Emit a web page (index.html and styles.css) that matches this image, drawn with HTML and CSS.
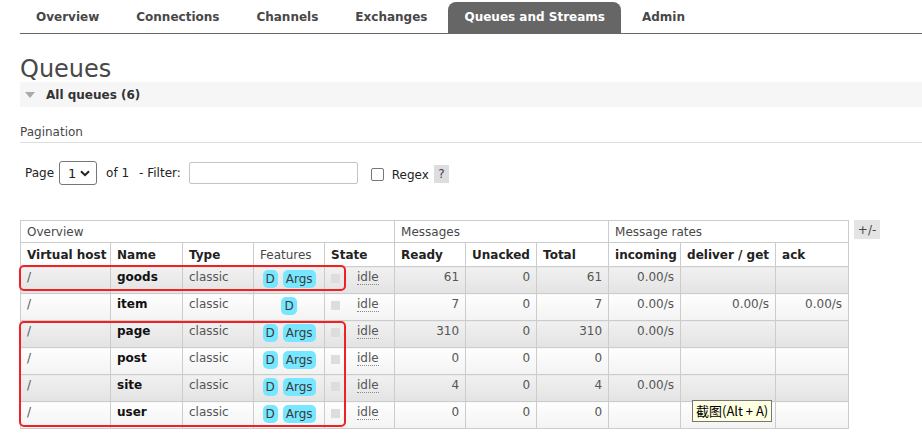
FILE: index.html
```html
<!DOCTYPE html>
<html>
<head>
<meta charset="utf-8">
<link rel="stylesheet" href="styles.css">
</head>
<body>
<div class="page">
  <nav class="tabs">
    <a class="tab">Overview</a>
    <a class="tab">Connections</a>
    <a class="tab">Channels</a>
    <a class="tab">Exchanges</a>
    <a class="tab active">Queues and Streams</a>
    <a class="tab">Admin</a>
  </nav>
  <h1 class="title">Queues</h1>
  <div class="section-head"><span class="tri"></span><span>All queues (6)</span></div>
  <h3 class="pag-title">Pagination</h3>
  <div class="filter-row">
    <span class="lbl">Page</span>
    <span class="select"><span>1</span><svg width="10" height="7" viewBox="0 0 10 7"><path d="M1 1.2 L5 5.2 L9 1.2" fill="none" stroke="#222" stroke-width="2"/></svg></span>
    <span class="lbl of">of 1</span>
    <span class="lbl flt">- Filter:</span>
    <span class="input"></span>
    <span class="check"></span>
    <span class="lbl regex">Regex</span>
    <span class="help">?</span>
  </div>
  <div class="table-wrap">
    <table class="list">
      <colgroup>
        <col class="c90"><col class="c72"><col class="c71"><col class="c71"><col class="c70"><col class="c71"><col class="c71"><col class="c72"><col class="c72"><col class="c95"><col class="c73">
      </colgroup>
      <thead>
        <tr class="group">
          <th colspan="5">Overview</th>
          <th colspan="3">Messages</th>
          <th colspan="3">Message rates</th>
        </tr>
        <tr class="cols">
          <th>Virtual host</th><th>Name</th><th>Type</th><th class="plain">Features</th><th>State</th>
          <th>Ready</th><th>Unacked</th><th>Total</th>
          <th>incoming</th><th>deliver / get</th><th>ack</th>
        </tr>
      </thead>
      <tbody>
        <tr class="alt1">
          <td>/</td><td class="name">goods</td><td>classic</td>
          <td class="feat"><span class="badge">D</span><span class="badge">Args</span></td>
          <td><span class="sq"></span><span class="idle">idle</span></td>
          <td class="num">61</td><td class="num">0</td><td class="num">61</td>
          <td class="num">0.00/s</td><td class="num"></td><td class="num"></td>
        </tr>
        <tr class="alt2">
          <td>/</td><td class="name">item</td><td>classic</td>
          <td class="feat"><span class="badge">D</span></td>
          <td><span class="sq"></span><span class="idle">idle</span></td>
          <td class="num">7</td><td class="num">0</td><td class="num">7</td>
          <td class="num">0.00/s</td><td class="num">0.00/s</td><td class="num">0.00/s</td>
        </tr>
        <tr class="alt1">
          <td>/</td><td class="name">page</td><td>classic</td>
          <td class="feat"><span class="badge">D</span><span class="badge">Args</span></td>
          <td><span class="sq"></span><span class="idle">idle</span></td>
          <td class="num">310</td><td class="num">0</td><td class="num">310</td>
          <td class="num">0.00/s</td><td class="num"></td><td class="num"></td>
        </tr>
        <tr class="alt2">
          <td>/</td><td class="name">post</td><td>classic</td>
          <td class="feat"><span class="badge">D</span><span class="badge">Args</span></td>
          <td><span class="sq"></span><span class="idle">idle</span></td>
          <td class="num">0</td><td class="num">0</td><td class="num">0</td>
          <td class="num"></td><td class="num"></td><td class="num"></td>
        </tr>
        <tr class="alt1">
          <td>/</td><td class="name">site</td><td>classic</td>
          <td class="feat"><span class="badge">D</span><span class="badge">Args</span></td>
          <td><span class="sq"></span><span class="idle">idle</span></td>
          <td class="num">4</td><td class="num">0</td><td class="num">4</td>
          <td class="num">0.00/s</td><td class="num"></td><td class="num"></td>
        </tr>
        <tr class="alt2">
          <td>/</td><td class="name">user</td><td>classic</td>
          <td class="feat"><span class="badge">D</span><span class="badge">Args</span></td>
          <td><span class="sq"></span><span class="idle">idle</span></td>
          <td class="num">0</td><td class="num">0</td><td class="num">0</td>
          <td class="num"></td><td class="num"></td><td class="num"></td>
        </tr>
      </tbody>
    </table>
    <span class="plusminus">+/-</span>
    <div class="mark mark1"></div>
    <div class="mark mark2"></div>
    <div class="tooltip">截图(Alt + A)</div>
  </div>
</div>
</body>
</html>
```
FILE: styles.css
```css
* { box-sizing: border-box; }
body {
  margin: 0;
  background: #fff;
  font-family: "DejaVu Sans", Verdana, sans-serif;
  font-size: 12px;
  color: #484848;
}
.page { padding-left: 20px; }

.tabs {
  display: flex;
  gap: 5px;
  margin-top: 2px;
  height: 32px;
  border-bottom: 1px solid #666;
}
.tab {
  padding: 0 16px;
  font-weight: bold;
  line-height: 31px;
  color: #484848;
  border-radius: 8px 8px 0 0;
}
.tab.active { background: #666; color: #fff; }

.title {
  margin: 22px 0 0;
  font-size: 24px;
  font-weight: normal;
  line-height: 26px;
  color: #484848;
}

.section-head {
  display: flex;
  align-items: center;
  height: 25px;
  background: #f6f6f6;
  padding-left: 5px;
  font-weight: bold;
  color: #333;
}
.tri {
  width: 0; height: 0;
  border-left: 5px solid transparent;
  border-right: 5px solid transparent;
  border-top: 6px solid #aaa;
  margin: 1px 11px 0 0;
}

.pag-title {
  margin: 18px 0 0;
  font-size: 12px;
  font-weight: normal;
  line-height: 14px;
  padding-bottom: 3px;
  border-bottom: 1px solid #ddd;
  color: #484848;
}

.filter-row {
  display: flex;
  align-items: center;
  height: 24px;
  margin-top: 18px;
  padding-left: 5px;
  color: #222;
}
.select {
  display: flex;
  align-items: center;
  justify-content: space-between;
  width: 38px;
  height: 24px;
  margin-left: 5px;
  padding: 0 6px 0 8px;
  border: 1px solid #767676;
  border-radius: 3px;
  font-size: 13px;
}
.of { margin-left: 9px; }
.flt { margin-left: 10px; }
.input {
  width: 169px;
  height: 22px;
  margin-left: 8px;
  border: 1px solid #c4c4c4;
  border-radius: 2px;
}
.check {
  width: 13px;
  height: 13px;
  margin-left: 13px;
  margin-top: 2px;
  border: 1px solid #767676;
  border-radius: 2px;
}
.regex { margin-left: 8px; margin-top: 4px; }
.help {
  display: inline-flex;
  align-items: center;
  justify-content: center;
  width: 15px;
  height: 18px;
  margin-left: 5px;
  margin-top: 2px;
  background: #ddd;
  color: #50306a;
}

.table-wrap {
  position: relative;
  display: flex;
  align-items: flex-start;
  gap: 5px;
  margin-top: 35px;
}
.list {
  border-collapse: collapse;
  table-layout: fixed;
  width: 829px;
}
.c90 { width: 90px; } .c72 { width: 72px; } .c71 { width: 71px; }
.c70 { width: 70px; } .c95 { width: 95px; } .c73 { width: 73px; }
.list th, .list td {
  border: 1px solid #ccc;
  padding: 0 6px;
  text-align: left;
  white-space: nowrap;
  overflow: hidden;
}
.list tr.group { height: 22px; }
.list tr.group th { font-weight: normal; color: #484848; background: #fff; }
.list tr.cols { height: 24px; }
.list tr.cols th { font-weight: bold; color: #222; background: #fff; }
.list tr.cols th.plain { font-weight: normal; color: #484848; }
.list tbody tr { height: 27px; }
.list td {
  vertical-align: top;
  padding-top: 3px;
  line-height: 15px;
  color: #555;
}
.list tr.alt1 td { background: linear-gradient(#f1f1f1, #e3e3e3); }
.list tr.alt2 td { background: linear-gradient(#fefefe, #f3f3f3); }
.list td.name { font-weight: bold; color: #111; }
.list td.num { text-align: right; }
.list td.feat { text-align: center; line-height: 17px; }
.badge {
  display: inline-block;
  padding: 0 3px;
  margin: 0 2.5px;
  background: #77e6ff;
  border-radius: 5px;
  color: #3a3a3a;
  line-height: 18px;
}
.sq {
  display: inline-block;
  width: 9px;
  height: 9px;
  background: #ddd;
  margin: 4px 17px 0 0;
  vertical-align: top;
}
.idle { border-bottom: 1px dotted #888; }

.plusminus {
  display: inline-flex;
  align-items: center;
  justify-content: center;
  width: 26px;
  height: 19px;
  background: #e4e4e4;
  color: #484848;
}

.mark {
  position: absolute;
  left: -1px;
  width: 327px;
  border: 2px solid #ee2222;
  border-radius: 5px;
}
.mark1 { top: 45px; height: 26px; }
.mark2 { top: 101px; height: 106px; }

.tooltip {
  position: absolute;
  left: 672px;
  top: 180px;
  height: 22px;
  padding: 0 3px;
  background: #ffffe1;
  border: 1px solid #767676;
  color: #000;
  font-family: "Noto Sans CJK SC", "DejaVu Sans", sans-serif;
  font-size: 13px;
  line-height: 20px;
}
```
